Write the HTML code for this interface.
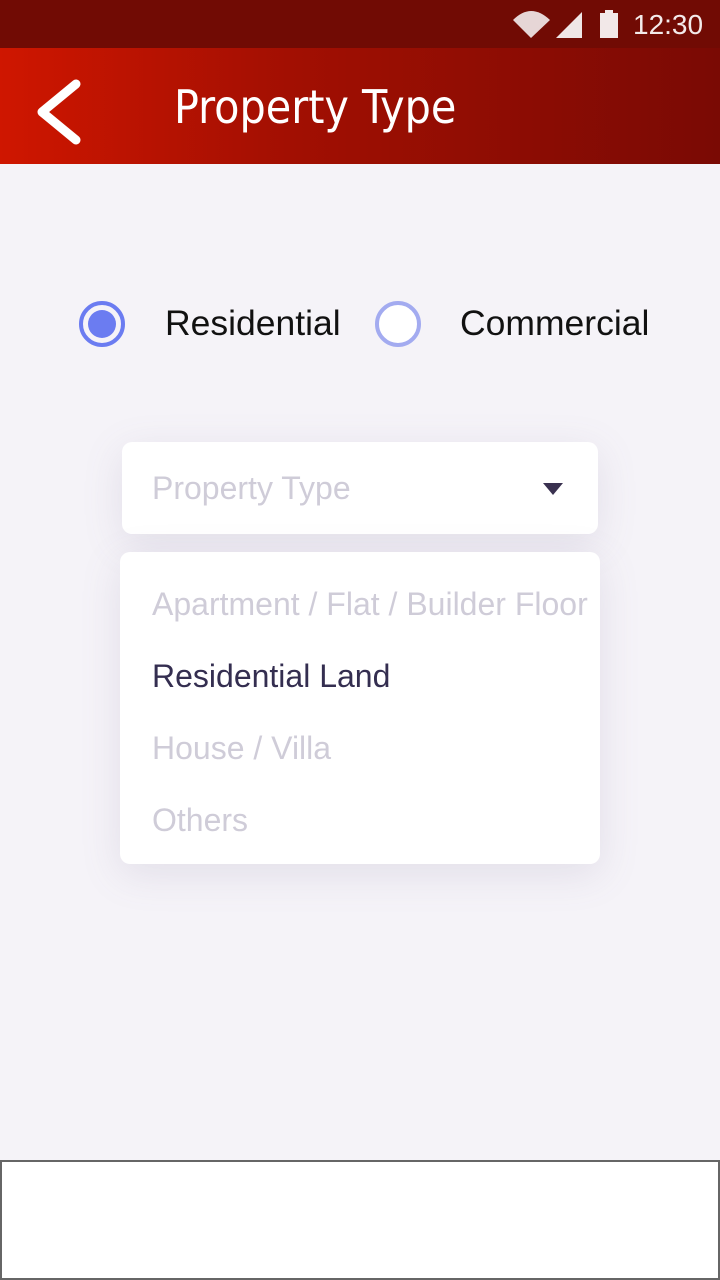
<!DOCTYPE html>
<html><head><meta charset="utf-8"><style>
*{margin:0;padding:0;box-sizing:border-box}
body{width:720px;height:1280px;background:#f5f3f8;font-family:"Liberation Sans",sans-serif;position:relative;overflow:hidden}
.status{position:absolute;top:0;left:0;width:720px;height:48px;background:#710b04}
.bar{position:absolute;top:48px;left:0;width:720px;height:116px;background:linear-gradient(90deg,#cf1600,#a20f02 40%,#7a0a04)}
.title{position:absolute;left:174px;top:80px;color:#fff;font-size:46px;font-family:"DejaVu Sans Condensed","Liberation Sans",sans-serif}
.t{position:absolute;font-size:35.5px;color:#111}
.card{position:absolute;background:#fff;border-radius:10px;box-shadow:0 10px 40px rgba(120,110,150,.15)}
.opt{position:absolute;left:32px;font-size:32px;color:#cfccd8}
.foot{position:absolute;left:0;top:1160px;width:720px;height:120px;background:#fff;border:2px solid #666}
</style></head><body>
<div class="status">
<svg width="720" height="48" style="position:absolute;left:0;top:0">
<path d="M513 20 Q531 2 550 20 L531 38 Z" fill="#e6d6d6"/>
<path d="M556 38 L582 12 L582 38 Z" fill="#efe6e6"/>
<rect x="600" y="13" width="18" height="25" fill="#f2e8e8"/><rect x="605" y="10" width="8" height="4" fill="#f2e8e8"/>
<text x="633" y="34" fill="#f3eaea" font-size="28" font-family="Liberation Sans">12:30</text>
</svg></div>
<div class="bar"><svg width="80" height="116" style="position:absolute;left:20px;top:0"><path d="M56 36 L22 64 L56 92" stroke="#fff" stroke-width="9" fill="none" stroke-linecap="round" stroke-linejoin="round"/></svg></div>
<div class="title">Property Type</div>
<svg width="720" height="60" style="position:absolute;left:0;top:294px">
<circle cx="102" cy="30" r="21" fill="none" stroke="#6b7cf1" stroke-width="4"/><circle cx="102" cy="30" r="14" fill="#6b7cf1"/>
<circle cx="398" cy="30" r="21" fill="#fff" stroke="#a3abf0" stroke-width="4"/></svg>
<div class="t" style="left:165px;top:303px">Residential</div>
<div class="t" style="left:460px;top:303px">Commercial</div>
<div class="card" style="left:122px;top:442px;width:476px;height:92px">
<div class="opt" style="top:28px;left:30px">Property Type</div>
<svg width="24" height="16" style="position:absolute;left:420px;top:40px"><path d="M1 1 L21 1 L11 13 Z" fill="#3a3150"/></svg></div>
<div class="card" style="left:120px;top:552px;width:480px;height:312px">
<div class="opt" style="top:34px">Apartment / Flat / Builder Floor</div>
<div class="opt" style="top:106px;color:#342e50">Residential Land</div>
<div class="opt" style="top:178px">House / Villa</div>
<div class="opt" style="top:250px">Others</div></div>
<div class="foot"></div>
</body></html>
